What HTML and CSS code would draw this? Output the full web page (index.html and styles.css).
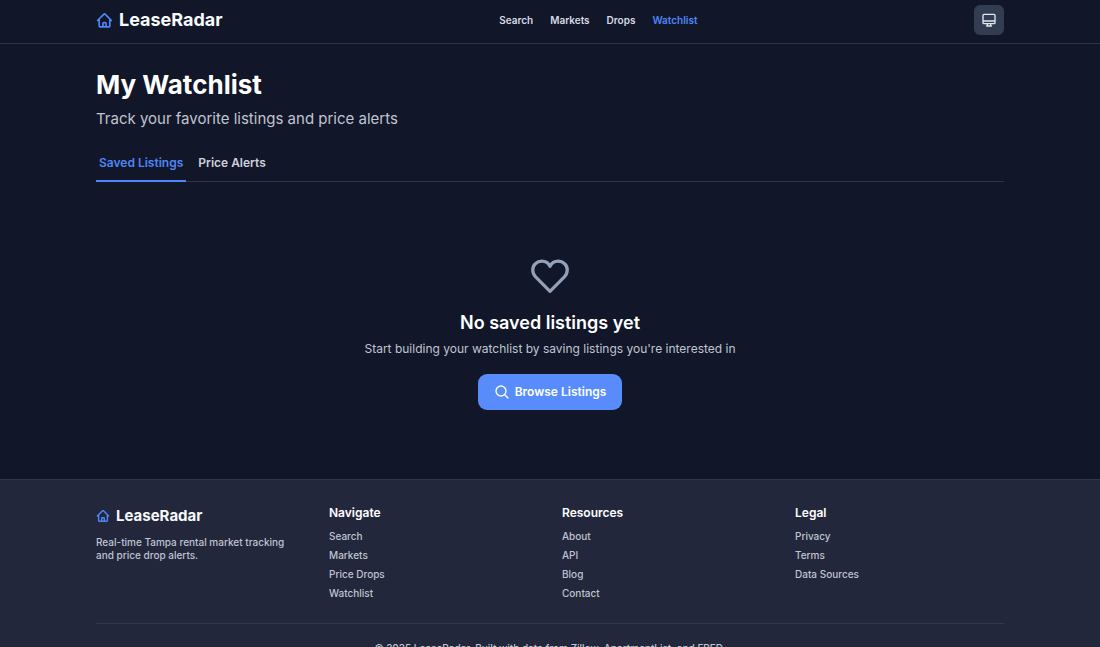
FILE: index.html
```html
<!DOCTYPE html>
<html lang="en">
<head>
<meta charset="utf-8">
<meta name="viewport" content="width=device-width, initial-scale=1">
<title>My Watchlist - LeaseRadar</title>
<link rel="stylesheet" href="styles.css">
</head>
<body>
<svg class="sprite" aria-hidden="true">
  <symbol id="home" viewBox="0 0 24 24"><path d="m2.25 12 8.954-8.955c.44-.439 1.152-.439 1.591 0L21.75 12M4.5 9.75v10.125c0 .621.504 1.125 1.125 1.125H9.75v-4.875c0-.621.504-1.125 1.125-1.125h2.25c.621 0 1.125.504 1.125 1.125V21h4.125c.621 0 1.125-.504 1.125-1.125V9.75M8.25 21h8.25"/></symbol>
</svg>
<header class="header">
  <div class="container header-row">
    <a class="brand" href="#"><svg class="icon brand-icon" aria-hidden="true"><use href="#home"/></svg>LeaseRadar</a>
    <nav class="nav" aria-label="Main">
      <a href="#">Search</a>
      <a href="#">Markets</a>
      <a href="#">Drops</a>
      <a class="active" href="#" aria-current="page">Watchlist</a>
    </nav>
    <button class="theme-toggle" type="button" aria-label="Theme">
      <svg class="icon theme-icon" viewBox="0 0 24 24" aria-hidden="true"><path d="M4.500 3.500h15a1.500 1.500 0 0 1 1.500 1.500v11a1.500 1.500 0 0 1-1.500 1.500h-15A1.500 1.500 0 0 1 3 16V5a1.500 1.500 0 0 1 1.500-1.500ZM3 13.500h18M9.500 17.500v2L8.500 21h7l-1-1.500v-2"/></svg>
    </button>
  </div>
</header>
<main class="container main">
  <h1 class="title">My Watchlist</h1>
  <p class="subtitle">Track your favorite listings and price alerts</p>
  <div class="tabs" role="tablist">
    <button class="tab selected" type="button" role="tab" aria-selected="true">Saved Listings</button>
    <button class="tab" type="button" role="tab" aria-selected="false">Price Alerts</button>
  </div>
  <section class="empty">
    <svg class="icon heart" viewBox="0 0 24 24" aria-hidden="true"><path d="M21 8.250c0-2.485-2.099-4.500-4.688-4.500-1.935 0-3.597 1.126-4.312 2.733-.715-1.607-2.377-2.733-4.313-2.733C5.100 3.750 3 5.765 3 8.250c0 1.500.5 2.700 1.500 3.700L12 19.500l7.500-7.550c1-1 1.500-2.200 1.500-3.700Z"/></svg>
    <h2 class="empty-title">No saved listings yet</h2>
    <p class="empty-text">Start building your watchlist by saving listings you're interested in</p>
    <a class="browse" href="#"><svg class="icon search-icon" viewBox="0 0 24 24" aria-hidden="true"><path d="m21 21-5.197-5.197m0 0A7.500 7.500 0 1 0 5.196 5.196a7.500 7.500 0 0 0 10.607 10.607Z"/></svg>Browse Listings</a>
  </section>
</main>
<footer class="footer">
  <div class="container">
    <div class="footer-grid">
      <div>
        <a class="brand footer-brand" href="#"><svg class="icon footer-icon" aria-hidden="true"><use href="#home"/></svg>LeaseRadar</a>
        <p class="about">Real-time Tampa rental market tracking and price drop alerts.</p>
      </div>
      <div>
        <h3 class="footer-title">Navigate</h3>
        <ul class="links"><li><a href="#">Search</a></li><li><a href="#">Markets</a></li><li><a href="#">Price Drops</a></li><li><a href="#">Watchlist</a></li></ul>
      </div>
      <div>
        <h3 class="footer-title">Resources</h3>
        <ul class="links"><li><a href="#">About</a></li><li><a href="#">API</a></li><li><a href="#">Blog</a></li><li><a href="#">Contact</a></li></ul>
      </div>
      <div>
        <h3 class="footer-title">Legal</h3>
        <ul class="links"><li><a href="#">Privacy</a></li><li><a href="#">Terms</a></li><li><a href="#">Data Sources</a></li></ul>
      </div>
    </div>
    <p class="copyright">© 2025 LeaseRadar. Built with data from Zillow, ApartmentList, and FRED.</p>
  </div>
</footer>
</body>
</html>
```
FILE: styles.css
```css
* { box-sizing: border-box; }
body {
  margin: 0;
  background: #111629;
  color: #fff;
  font-family: Inter, "Liberation Sans", sans-serif;
  font-size: 12px;
  line-height: 16px;
}
h1, h2, h3, p, ul { margin: 0; padding: 0; }
a { color: inherit; text-decoration: none; }
button { font: inherit; border: 0; cursor: pointer; }
.sprite { position: absolute; width: 0; height: 0; }
.icon {
  fill: none;
  stroke: currentColor;
  stroke-width: 2;
  stroke-linecap: round;
  stroke-linejoin: round;
  flex: none;
}
.container { width: calc(100% - 48px); max-width: 908px; margin: 0 auto; }

.header { border-bottom: 1px solid #2d3448; }
.header-row {
  display: flex;
  justify-content: space-between;
  align-items: center;
  padding: 5px 0 8px;
}
.brand { display: flex; align-items: center; gap: 6px; font-size: 18px; line-height: 24px; font-weight: 700; color: #f8fafc; }
.brand .icon { color: #4f86f7; stroke-width: 2.4; }
.brand-icon { width: 17px; height: 17px; }
.nav { display: flex; gap: 17px; font-size: 10px; font-weight: 600; color: #d5dae3; }
.nav .active { color: #4f86f7; }
.theme-toggle {
  display: grid;
  place-items: center;
  width: 30px;
  height: 30px;
  padding: 0;
  border-radius: 6px;
  background: #333d52;
  color: #e2e8f0;
}
.theme-icon { width: 16px; height: 16px; }

.main { padding: 25px 0 69px; }
.title { font-size: 26px; line-height: 32px; font-weight: 700; }
.subtitle { margin-top: 8px; font-size: 15px; line-height: 20px; color: #c0c5d0; }
.tabs { display: flex; gap: 9px; margin-top: 18px; border-bottom: 1px solid #2d3448; }
.tab {
  padding: 8px 3px 9px;
  margin-bottom: -1px;
  border-bottom: 2px solid transparent;
  background: none;
  font-weight: 600;
  color: #cdd2db;
}
.tab.selected { color: #4f86f7; border-color: #4f86f7; }
.empty { display: flex; flex-direction: column; align-items: center; padding-top: 72px; text-align: center; }
.heart { width: 46px; height: 46px; stroke-width: 1.7; color: #94a0b8; }
.empty-title { margin-top: 11px; font-size: 18px; line-height: 24px; font-weight: 600; }
.empty-text { margin-top: 6px; color: #c0c5d0; }
.browse {
  display: flex;
  align-items: center;
  gap: 5px;
  margin-top: 17px;
  padding: 10px 16px;
  border-radius: 9px;
  background: #588cfb;
  font-weight: 600;
}
.search-icon { width: 16px; height: 16px; }

.footer { border-top: 1px solid #2d364a; background: #22273b; padding: 24px 0; }
.footer-grid {
  display: grid;
  grid-template-columns: repeat(auto-fit, minmax(160px, 1fr));
  gap: 24px;
  padding-bottom: 22px;
  border-bottom: 1px solid #31384c;
}
.footer-brand { font-size: 15px; }
.footer-icon { width: 14px; height: 14px; }
.about { max-width: 200px; margin-top: 8px; font-size: 10px; line-height: 13px; font-weight: 500; color: #bfc5d1; }
.footer-title { font-size: 12px; line-height: 18px; font-weight: 600; }
.links { display: grid; gap: 3px; margin-top: 6px; list-style: none; font-size: 10px; font-weight: 500; color: #bfc5d1; }
.copyright { margin-top: 16px; font-size: 10px; font-weight: 500; text-align: center; color: #bfc5d1; }
```
